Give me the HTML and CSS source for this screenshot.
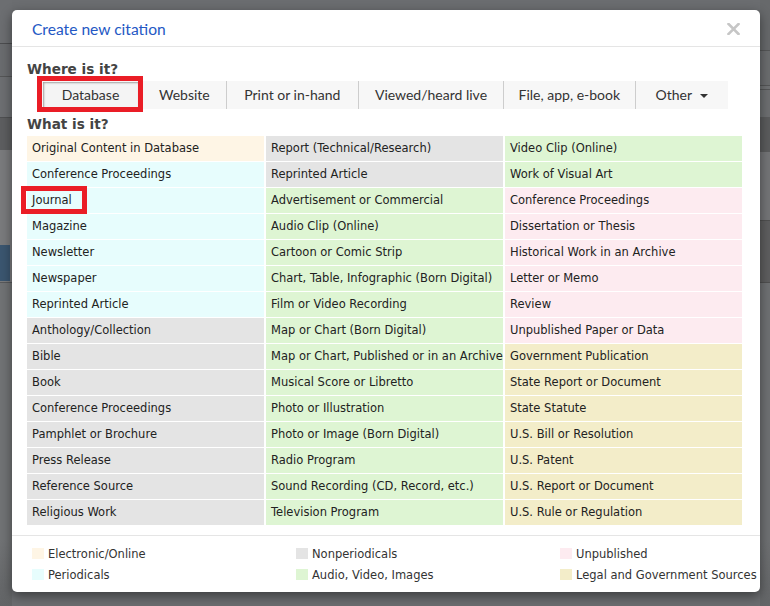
FILE: index.html
```html
<!DOCTYPE html>
<html lang="en">
<head>
<meta charset="utf-8">
<title>Create new citation</title>
<link rel="stylesheet" href="styles.css">
</head>
<body>
<div class="modal">
  <div class="modal-header">
    <span class="title">Create new citation</span>
    <span class="close" aria-label="Close">
      <svg width="13" height="12" viewBox="0 0 13 12"><path d="M1.5 1 L11.5 11 M11.5 1 L1.5 11" stroke="#c6c6c6" stroke-width="2.6" stroke-linecap="square"/></svg>
    </span>
  </div>
  <div class="modal-body">
    <h3 class="section-title">Where is it?</h3>
    <div class="tabs">
      <div class="tab active">Database<span class="annot annot-tab"></span></div>
      <div class="tab">Website</div>
      <div class="tab divided print">Print or in-hand</div>
      <div class="tab divided">Viewed/heard live</div>
      <div class="tab divided file">File, app, e-book</div>
      <div class="tab divided other">Other <span class="caret"></span></div>
    </div>
    <h3 class="section-title second">What is it?</h3>
    <div class="types">
      <div class="type electronic">Original Content in Database</div>
      <div class="type periodical">Conference Proceedings</div>
      <div class="type periodical marked">Journal<span class="annot annot-cell"></span></div>
      <div class="type periodical">Magazine</div>
      <div class="type periodical">Newsletter</div>
      <div class="type periodical">Newspaper</div>
      <div class="type periodical">Reprinted Article</div>
      <div class="type nonperiodical">Anthology/Collection</div>
      <div class="type nonperiodical">Bible</div>
      <div class="type nonperiodical">Book</div>
      <div class="type nonperiodical">Conference Proceedings</div>
      <div class="type nonperiodical">Pamphlet or Brochure</div>
      <div class="type nonperiodical">Press Release</div>
      <div class="type nonperiodical">Reference Source</div>
      <div class="type nonperiodical">Religious Work</div>

      <div class="type nonperiodical">Report (Technical/Research)</div>
      <div class="type nonperiodical">Reprinted Article</div>
      <div class="type media">Advertisement or Commercial</div>
      <div class="type media">Audio Clip (Online)</div>
      <div class="type media">Cartoon or Comic Strip</div>
      <div class="type media">Chart, Table, Infographic (Born Digital)</div>
      <div class="type media">Film or Video Recording</div>
      <div class="type media">Map or Chart (Born Digital)</div>
      <div class="type media">Map or Chart, Published or in an Archive</div>
      <div class="type media">Musical Score or Libretto</div>
      <div class="type media">Photo or Illustration</div>
      <div class="type media">Photo or Image (Born Digital)</div>
      <div class="type media">Radio Program</div>
      <div class="type media">Sound Recording (CD, Record, etc.)</div>
      <div class="type media">Television Program</div>

      <div class="type media">Video Clip (Online)</div>
      <div class="type media">Work of Visual Art</div>
      <div class="type unpublished">Conference Proceedings</div>
      <div class="type unpublished">Dissertation or Thesis</div>
      <div class="type unpublished">Historical Work in an Archive</div>
      <div class="type unpublished">Letter or Memo</div>
      <div class="type unpublished">Review</div>
      <div class="type unpublished">Unpublished Paper or Data</div>
      <div class="type legal">Government Publication</div>
      <div class="type legal">State Report or Document</div>
      <div class="type legal">State Statute</div>
      <div class="type legal">U.S. Bill or Resolution</div>
      <div class="type legal">U.S. Patent</div>
      <div class="type legal">U.S. Report or Document</div>
      <div class="type legal">U.S. Rule or Regulation</div>
    </div>
  </div>
  <div class="legend">
    <div class="legend-item"><span class="swatch electronic"></span>Electronic/Online</div>
    <div class="legend-item"><span class="swatch nonperiodical"></span>Nonperiodicals</div>
    <div class="legend-item"><span class="swatch unpublished"></span>Unpublished</div>
    <div class="legend-item"><span class="swatch periodical"></span>Periodicals</div>
    <div class="legend-item"><span class="swatch media"></span>Audio, Video, Images</div>
    <div class="legend-item"><span class="swatch legal"></span>Legal and Government Sources</div>
  </div>
</div>
</body>
</html>
```
FILE: styles.css
```css
html, body {
  margin: 0;
  padding: 0;
}
body {
  width: 770px;
  height: 606px;
  overflow: hidden;
  box-sizing: border-box;
  padding: 10px 0 0 12px;
  font-family: "DejaVu Sans", Verdana, sans-serif;
  background:
    linear-gradient(#3b5670, #3b5670) 0 245px / 10px 36px no-repeat,
    linear-gradient(to bottom,
      #6c6e71 0 43px, #4c4d4f 43px 44px, #6a6c6f 44px 76px, #555657 76px 77px,
      #6d6f72 77px 117px, #4f5052 117px 118px, #5d5e60 118px 150px,
      #7a7b7d 150px 282px, #58595b 282px 283px, #717375 283px 540px, #626466 606px)
      0 0 / 12px 606px no-repeat,
    linear-gradient(to bottom,
      #67696b 0 50px, #555657 50px 51px, #6b6d6f 51px 85px, #555657 85px 86px,
      #707274 86px 89px, #555657 89px 90px, #6d6f71 90px 117px, #5b5c5d 117px 152px,
      #747577 152px 220px, #505050 220px 221px, #5e5e5f 221px 282px, #505050 282px 283px,
      #6f7173 283px 540px, #636567 606px)
      760px 0 / 10px 606px no-repeat,
    #6b6d70;
}

.modal {
  width: 748px;
  height: 582px;
  background: #fff;
  border-radius: 5px;
  box-shadow: 0 4px 12px rgba(0, 0, 0, 0.45);
  display: flex;
  flex-direction: column;
  overflow: hidden;
}

.modal-header {
  flex: none;
  height: 36px;
  border-bottom: 1px solid #e5e5e5;
  display: flex;
  align-items: center;
  justify-content: space-between;
  padding: 0 20px 0 20px;
}
.title {
  font-family: Lato, "Liberation Sans", sans-serif;
  font-size: 15.6px;
  color: #2458c4;
  padding-top: 1px;
}
.close {
  display: flex;
  padding-top: 2px;
}

.modal-body {
  padding: 0 15px;
  flex: none;
}
.section-title {
  margin: 12px 0 2px 0;
  font-family: "DejaVu Sans", Verdana, sans-serif;
  font-weight: bold;
  font-size: 13.6px;
  line-height: 20px;
  color: #444;
}
.section-title.second {
  margin: 5px 0 2px 0;
}

.tabs {
  display: flex;
  margin-left: 10px;
  width: 691px;
  height: 28px;
  background: #f7f7f7;
  font-family: Lato, "Liberation Sans", sans-serif;
  font-size: 14px;
  color: #333;
}
.tab {
  flex: none;
  padding: 0 16px;
  line-height: 28px;
  box-sizing: border-box;
}
.tab.divided {
  border-left: 1px solid #cdcdcd;
}
.tab.print {
  padding: 0 17.5px;
}
.tab.file {
  padding: 0 14.5px;
}
.tab.active {
  position: relative;
  margin: 1px 5px 1px 6px;
  width: 95px;
  padding: 0;
  text-align: center;
  line-height: 26px;
  background: #f4f4f4;
  box-shadow: inset 1px 1px 2px rgba(0, 0, 0, 0.35);
}
.tab.other {
  flex: 1;
  padding-left: 20px;
  display: flex;
  align-items: center;
  gap: 2px;
}
.caret {
  display: inline-block;
  width: 0;
  height: 0;
  margin-left: 6px;
  margin-top: 2px;
  border-left: 4px solid transparent;
  border-right: 4px solid transparent;
  border-top: 4px solid #333;
}

.annot {
  position: absolute;
  box-sizing: border-box;
  border: 5px solid #ea1d26;
  pointer-events: none;
}
.annot-tab {
  left: -6px;
  right: -5px;
  top: -6px;
  bottom: -4px;
}
.annot-cell {
  left: -6px;
  top: -2px;
  width: 66px;
  height: 28px;
}

.types {
  display: grid;
  grid-template-columns: repeat(3, 237px);
  grid-template-rows: repeat(15, 25px);
  grid-auto-flow: column;
  gap: 1px 2px;
  margin-top: 2px;
}
.type {
  padding-left: 5px;
  font-size: 11.5px;
  line-height: 25px;
  color: #222;
  white-space: nowrap;
  overflow: hidden;
}
.type.marked {
  position: relative;
  overflow: visible;
}

.electronic { background: #fef5e5; }
.periodical { background: #e7fdfd; }
.nonperiodical { background: #e4e4e4; }
.media { background: #def5d3; }
.unpublished { background: #fdebf0; }
.legal { background: #f3edc9; }

.legend {
  flex: none;
  border-top: 1px solid #e5e5e5;
  margin-top: 10px;
  padding: 7px 0 0 20px;
  display: grid;
  grid-template-columns: 264px 264px 1fr;
  grid-auto-rows: 21px;
  align-content: start;
}
.legend-item {
  display: flex;
  align-items: center;
  gap: 4px;
  font-size: 11.5px;
  color: #333;
  white-space: nowrap;
}
.swatch {
  width: 12px;
  height: 11px;
  flex: none;
}
```
